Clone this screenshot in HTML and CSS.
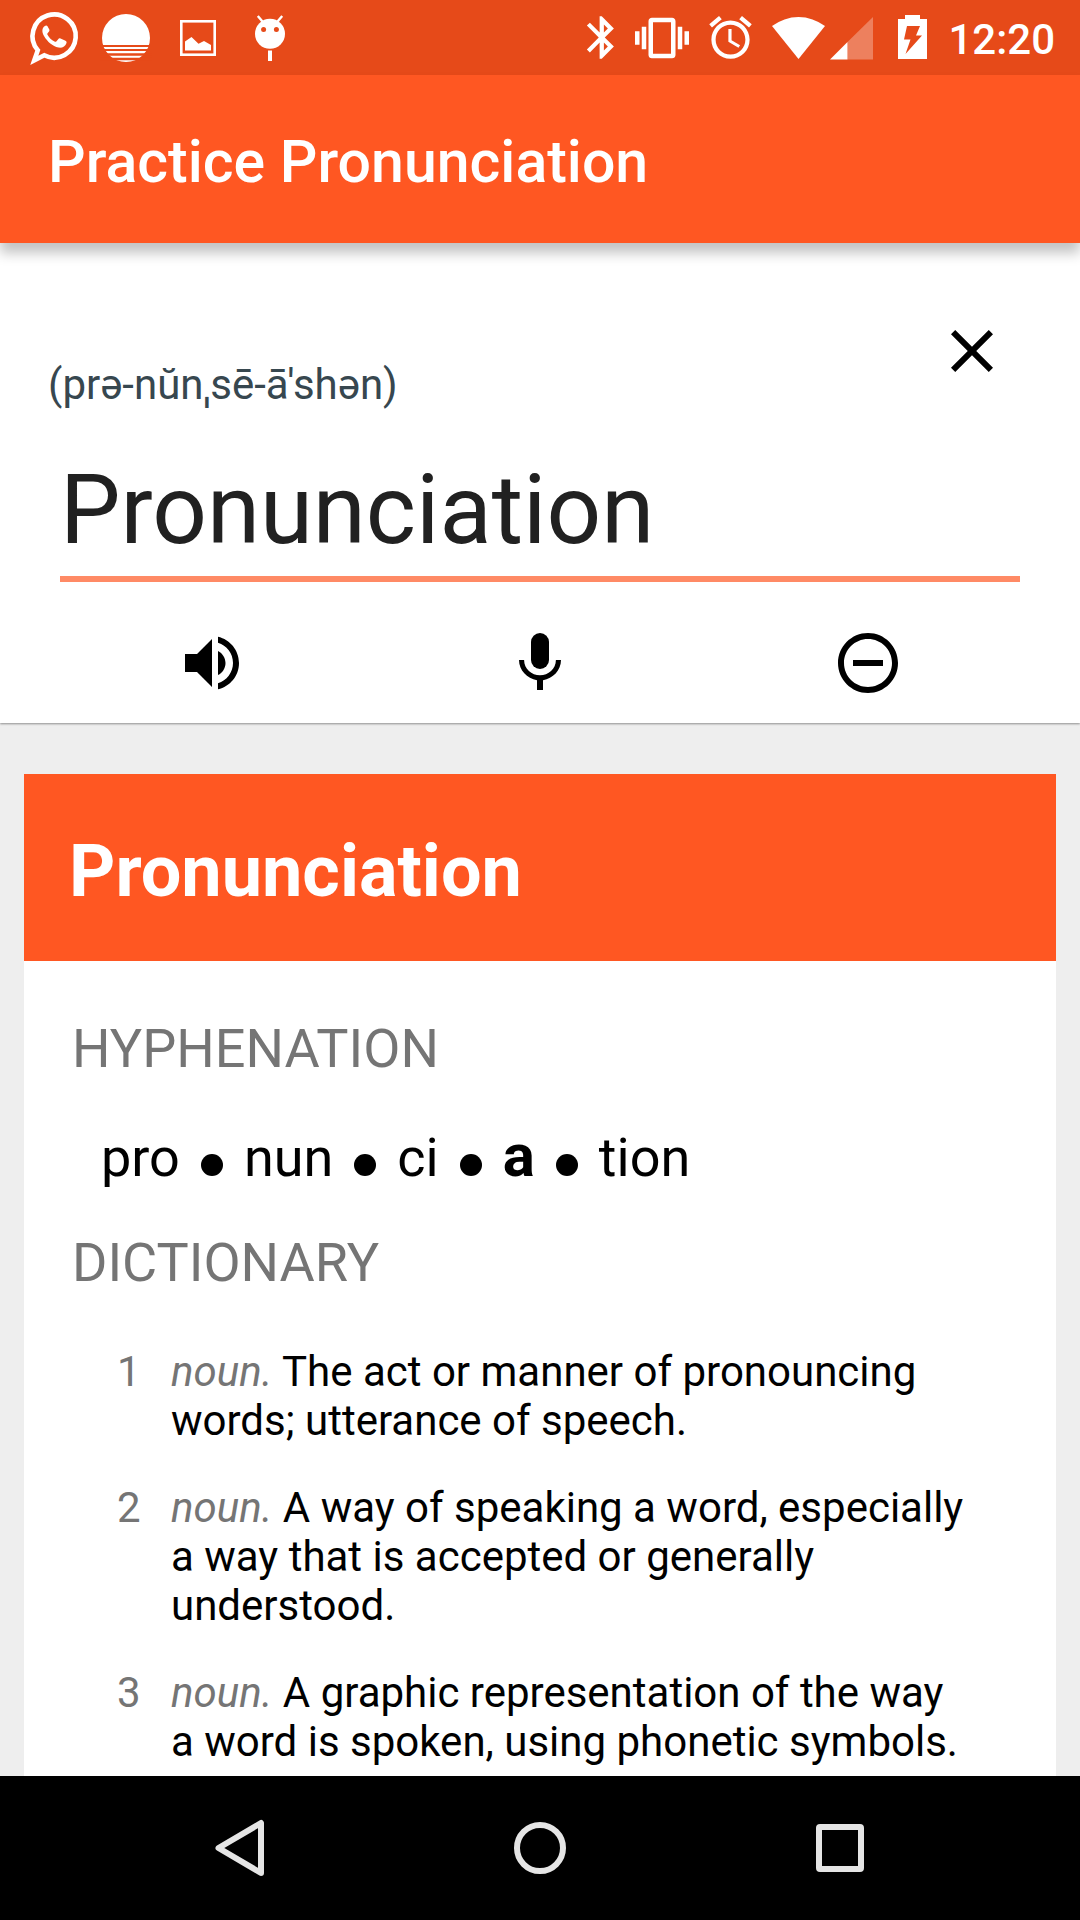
FILE: index.html
```html
<!DOCTYPE html>
<html lang="en">
<head>
<meta charset="utf-8">
<meta name="viewport" content="width=device-width, initial-scale=1">
<title>Practice Pronunciation</title>
<link rel="stylesheet" href="styles.css">
</head>
<body>
<div class="status-bar">
  <div class="notifications">
    <svg class="notification" viewBox="18 0 72 75" aria-hidden="true">
      <path d="M34.3 60.3L37.8 50.2A21.6 21.6 0 1 1 44.3 55.3Z" fill="none" stroke="currentColor" stroke-width="4.6"/>
      <path d="M44.5 26.2C42 28 41.6 32 44 36C47.5 42 52.5 46 58.5 47.6C62 48.3 65.5 46.3 66.5 43C66.8 41.8 66.3 41.2 65 40.6L60.5 38.5C59.5 38 58.8 38.3 58.2 39.2L56.5 41.2C55.9 41.9 55.3 41.9 54.5 41.5C51.5 40 49 37.7 47.5 34.7C47.1 34 47.2 33.6 47.8 33L49.2 31.2C49.6 30.6 49.5 30.1 49.3 29.5L47.5 26.3C46.8 25 45.7 25.2 44.5 26.2Z" fill="currentColor"/>
    </svg>
    <svg class="notification" viewBox="90 0 72 75" aria-hidden="true">
      <circle cx="126" cy="38" r="24" fill="currentColor"/>
      <path class="cutout" d="M100 45h52v2h-52zM100 49h52v2h-52zM100 53.2h52v2.5h-52zM100 57.7h52v2.5h-52z"/>
    </svg>
    <svg class="notification" viewBox="162 0 72 75" aria-hidden="true">
      <rect x="181.3" y="21.3" width="33.4" height="33.4" fill="none" stroke="currentColor" stroke-width="2.6"/>
      <path d="M185 50.5V41.5L191.5 37L198.500 43.800L204 41L211 45V50.500Z" fill="currentColor"/>
    </svg>
    <svg class="notification" viewBox="234 0 72 75" aria-hidden="true">
      <circle cx="270" cy="33.800" r="15" fill="currentColor"/>
      <path d="M257.800 16L262.500 21.500M282.200 16L277.500 21.500" stroke="currentColor" stroke-width="2.400"/>
      <path d="M268 50.500h4v10.500h-4z" fill="currentColor"/>
      <circle class="cutout" cx="263.600" cy="29.400" r="2.500"/>
      <circle class="cutout" cx="276.400" cy="29.400" r="2.500"/>
    </svg>
  </div>
  <div class="indicators">
    <svg class="bluetooth" viewBox="0 0 20 24" aria-hidden="true"><path fill="currentColor" d="M17.71 7.71L12 2h-1v7.59L6.41 5 5 6.41 10.59 12 5 17.59 6.41 19 11 14.41V22h1l5.71-5.71-4.3-4.29 4.3-4.29zM13 5.83l1.88 1.88L13 9.59V5.83zm1.88 10.46L13 18.17v-3.76l1.88 1.88z"/></svg>
    <svg class="vibrate" viewBox="0 0 24 24" aria-hidden="true"><path fill="currentColor" d="M0 15h2V9H0v6zm3 2h2V7H3v10zm19-8v6h2V9h-2zm-3 8h2V7h-2v10zM16.500 3h-9C6.670 3 6 3.670 6 4.500v15c0 .83.67 1.500 1.500 1.500h9c.83 0 1.500-.67 1.500-1.500v-15c0-.83-.67-1.500-1.500-1.500zM16 19H8V5h8v14z"/></svg>
    <svg class="alarm" viewBox="0 0 24 24" aria-hidden="true"><path fill="currentColor" d="M22 5.72l-4.6-3.86-1.29 1.53 4.6 3.86L22 5.72zM7.88 3.39L6.6 1.86 2 5.71l1.29 1.53 4.59-3.85zM12.5 8H11v6l4.75 2.85.75-1.23-4-2.37V8zM12 4c-4.97 0-9 4.030-9 9s4.020 9 9 9c4.970 0 9-4.030 9-9s-4.030-9-9-9zm0 16c-3.870 0-7-3.130-7-7s3.130-7 7-7 7 3.130 7 7-3.130 7-7 7z"/></svg>
    <div class="signals">
      <svg class="wifi" viewBox="0 0 54 44" aria-hidden="true"><path fill="currentColor" d="M0 10A44 44 0 0 1 53 10L26.500 43Z"/></svg>
      <svg class="cell" viewBox="0 0 44 44" aria-hidden="true"><path fill="currentColor" opacity=".3" d="M17.500 26L43 1V43.500H17.500Z"/><path fill="currentColor" d="M0 43.500L17.500 26V43.500Z"/></svg>
    </div>
    <svg class="battery" viewBox="-8 0 42 45" aria-hidden="true"><path fill="currentColor" fill-rule="evenodd" d="M7 0H22V4H29V44H0V4H7ZM9 11H22L18 20.500H24L7.500 39L12.500 24.500H6Z"/></svg>
    <time class="clock">12:20</time>
  </div>
</div>

<header class="app-bar"><h1 class="app-title">Practice Pronunciation</h1></header>

<main class="content">
  <section class="practice">
    <div class="practice-top">
      <label class="phonetic" for="word">(prə-nŭnˌsē-ā'shən)</label>
      <button class="icon-button" type="button" aria-label="Clear">
        <svg class="icon" viewBox="0 0 24 24"><path d="M19 6.41L17.59 5 12 10.59 6.41 5 5 6.41 10.59 12 5 17.59 6.41 19 12 13.41 17.59 19 19 17.59 13.41 12z"/></svg>
      </button>
    </div>
    <input class="word" id="word" type="text" value="Pronunciation" spellcheck="false">
    <div class="actions">
      <button class="icon-button" type="button" aria-label="Listen">
        <svg class="icon" viewBox="0 0 24 24"><path d="M3 9v6h4l5 5V4L7 9H3zm13.5 3c0-1.770-1.020-3.290-2.500-4.030v8.050c1.480-.73 2.500-2.250 2.500-4.020zM14 3.230v2.060c2.890.86 5 3.540 5 6.710s-2.110 5.850-5 6.710v2.060c4.010-.91 7-4.490 7-8.770s-2.990-7.860-7-8.770z"/></svg>
      </button>
      <button class="icon-button" type="button" aria-label="Record">
        <svg class="icon" viewBox="0 0 24 24"><rect x="9" y="2" width="6" height="12" rx="3"/><path d="M17.300 11c0 3-2.540 5.100-5.300 5.100S6.700 14 6.700 11H5c0 3.410 2.720 6.230 6 6.720V21h2v-3.280c3.280-.48 6-3.300 6-6.720h-1.700z"/></svg>
      </button>
      <button class="icon-button" type="button" aria-label="Remove">
        <svg class="icon" viewBox="0 0 24 24"><path d="M7 11v2h10v-2H7zm5-9C6.480 2 2 6.480 2 12s4.480 10 10 10 10-4.480 10-10S17.520 2 12 2zm0 18c-4.410 0-8-3.590-8-8s3.590-8 8-8 8 3.590 8 8-3.590 8-8 8z"/></svg>
      </button>
    </div>
  </section>

  <article class="card">
    <h2 class="card-title">Pronunciation</h2>
    <div class="card-body">
      <h3 class="section-title">HYPHENATION</h3>
      <p class="syllables">
        <span>pro</span><i class="dot"></i><span>nun</span><i class="dot"></i><span>ci</span><i class="dot"></i><strong class="stressed">a</strong><i class="dot"></i><span>tion</span>
      </p>
      <h3 class="section-title">DICTIONARY</h3>
      <ol class="definitions">
        <li class="definition"><span class="number">1</span><p class="meaning"><em class="part">noun.</em> The act or manner of pronouncing words; utterance of speech.</p></li>
        <li class="definition"><span class="number">2</span><p class="meaning"><em class="part">noun.</em> A way of speaking a word, especially a way that is accepted or generally understood.</p></li>
        <li class="definition"><span class="number">3</span><p class="meaning"><em class="part">noun.</em> A graphic representation of the way a word is spoken, using phonetic symbols.</p></li>
      </ol>
    </div>
  </article>
</main>

<nav class="nav-bar" aria-label="System">
  <button class="nav-button" type="button" aria-label="Back"><svg class="nav-icon" viewBox="0 0 72 72"><path d="M57 11V61L14.500 36Z"/></svg></button>
  <button class="nav-button" type="button" aria-label="Home"><svg class="nav-icon" viewBox="0 0 72 72"><circle cx="36" cy="36" r="23"/></svg></button>
  <button class="nav-button" type="button" aria-label="Recent apps"><svg class="nav-icon" viewBox="0 0 72 72"><rect x="15" y="15" width="42" height="42" rx="1"/></svg></button>
</nav>
</body>
</html>
```
FILE: styles.css
```css
* {
  box-sizing: border-box;
  margin: 0;
  padding: 0;
}

body {
  display: flex;
  flex-direction: column;
  height: 100vh;
  background: #eee;
  color: #000;
  font-family: Roboto, "Noto Sans", sans-serif;
}

button {
  display: flex;
  align-items: center;
  justify-content: center;
  border: 0;
  background: none;
}

svg {
  display: block;
}

/* Status bar */
.status-bar {
  display: flex;
  flex: none;
  align-items: center;
  justify-content: space-between;
  padding: 0 25px 0 18px;
  background: #e64a19;
  color: #fff;
}

.notifications,
.indicators,
.signals {
  display: flex;
  align-items: center;
}

.notification {
  width: 72px;
  height: 75px;
}

.cutout {
  fill: #e64a19;
}

.indicators {
  gap: 16px;
}

.signals {
  gap: 4px;
}

.bluetooth {
  width: 43px;
  height: 51px;
}

.vibrate {
  width: 54px;
  height: 54px;
}

.alarm {
  width: 51px;
  height: 51px;
}

.wifi {
  width: 54px;
  height: 44px;
}

.cell {
  width: 44px;
  height: 44px;
}

.battery {
  width: 42px;
  height: 45px;
}

.clock {
  padding-top: 4px;
  font-size: 42px;
  font-weight: 500;
  line-height: 49px;
}

/* App bar */
.app-bar {
  position: relative;
  z-index: 1;
  flex: none;
  padding: 52px 48px 46px;
  background: #ff5722;
  box-shadow: 0 10px 12px rgba(0, 0, 0, .24);
}

.app-title {
  color: #fff;
  font-size: 59px;
  font-weight: 500;
  line-height: 70px;
}

/* Scrolling content */
.content {
  flex: 1;
  min-height: 0;
  overflow-y: auto;
  scrollbar-width: none;
}

.practice {
  padding: 72px 48px 24px;
  background: #fff;
  box-shadow: 0 1px 2px rgba(0, 0, 0, .4);
}

.practice-top {
  display: flex;
  align-items: flex-start;
  justify-content: space-between;
  padding-right: 24px;
}

.phonetic {
  padding-top: 45px;
  color: #37474f;
  font-size: 42px;
  line-height: 49px;
}

.icon {
  width: 72px;
  height: 72px;
}

.word {
  display: block;
  width: calc(100% - 24px);
  height: 128px;
  margin: 45px 12px;
  padding-bottom: 10px;
  border: 0;
  border-bottom: 6px solid #ff8a65;
  outline: 0;
  background: none;
  color: #212121;
  font-family: inherit;
  font-size: 96px;
}

.actions {
  display: grid;
  grid-template-columns: repeat(3, 1fr);
}

/* Word card */
.card {
  margin: 51px 24px 24px;
  background: #fff;
}

.card-title {
  padding: 56px 45px 47px;
  background: #ff5722;
  color: #fff;
  font-size: 72px;
  font-weight: 700;
  line-height: 84px;
}

.card-body {
  padding: 56px 90px 48px 48px;
}

.section-title {
  color: #757575;
  font-size: 54px;
  font-weight: 400;
  line-height: 64px;
}

.syllables {
  display: flex;
  align-items: baseline;
  gap: 21px;
  padding: 43px 30px 41px 29px;
  font-size: 54px;
  line-height: 64px;
}

.stressed {
  font-size: 60px;
  line-height: 64px;
}

.dot {
  width: 22px;
  height: 22px;
  margin-bottom: -3px;
  border-radius: 50%;
  background: #000;
}

.definitions {
  display: grid;
  gap: 38px;
  padding: 52px 0 0 45px;
  list-style: none;
  font-size: 42px;
  line-height: 49px;
}

.definition {
  display: grid;
  grid-template-columns: 24px 1fr;
  gap: 30px;
}

.number,
.part {
  color: #757575;
}

/* Navigation bar */
.nav-bar {
  display: grid;
  flex: none;
  grid-template-columns: repeat(3, 1fr);
  padding: 36px 90px;
  background: #000;
}

.nav-icon {
  width: 72px;
  height: 72px;
  fill: none;
  stroke: #e5e5e5;
  stroke-linejoin: round;
  stroke-width: 6;
}
```
